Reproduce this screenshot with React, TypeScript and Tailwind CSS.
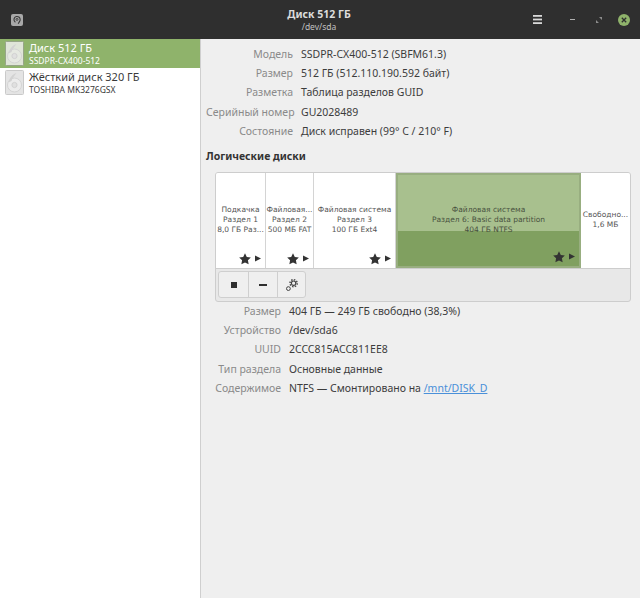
import React from "react";

const ui = { fontFamily: '"Noto Sans", sans-serif' };
const dj = { fontFamily: '"DejaVu Sans", sans-serif' };

function DiskIcon({ active }: { active?: boolean }) {
  return (
    <svg width="19" height="25" viewBox="0 0 19 25" className="shrink-0">
      <rect x="0.5" y="0.5" width="18" height="24" rx="1" fill={active ? "#dfe5d8" : "#e4e4e4"} stroke={active ? "#97a589" : "#cacaca"} />
      <circle cx="9.5" cy="15" r="7" fill={active ? "#e6e9e2" : "#ececec"} stroke="#d4d4d4" />
      <circle cx="9.5" cy="15" r="2.6" fill="#e0e0e0" stroke="#d2d2d2" />
      <path d="M3.5 12.5 C4.5 8 7.5 4 11.5 3 C9 6 7 9 6.5 11 Z" fill="#d2d2d2" />
    </svg>
  );
}

function DiskRow({ title, sub, active }: { title: string; sub: string; active?: boolean }) {
  return (
    <div className={`flex h-[29px] items-center gap-[5px] pl-[5px] ${active ? "bg-[#8fb36b] text-white" : "bg-white text-[#3a3a3a]"}`}>
      <DiskIcon active={active} />
      <div className="flex flex-col">
        <span className="text-[11px] leading-[14px]">{title}</span>
        <span className="text-[8.5px] leading-[11px]">{sub}</span>
      </div>
    </div>
  );
}

function Field({ label, width, children }: { label: string; width: string; children: React.ReactNode }) {
  return (
    <div className="flex h-[19.3px] items-center text-[10.5px]">
      <span className={`shrink-0 whitespace-nowrap text-right text-[#8a8a8a] ${width}`}>{label}</span>
      <span className="ml-[8px] whitespace-nowrap text-[#3c3c3c]">{children}</span>
    </div>
  );
}

function Marks() {
  return (
    <div className="absolute bottom-[3px] right-[4px] flex items-center gap-[4px] text-[#333]">
      <svg width="12" height="12" viewBox="0 0 24 24" fill="currentColor">
        <path d="M12 0.5l3.6 7.4 8.1 1.1-5.9 5.6 1.5 8.1-7.3-3.9-7.3 3.9 1.5-8.1L0.3 9l8.1-1.1z" />
      </svg>
      <svg width="6" height="7" viewBox="0 0 6 7" fill="currentColor">
        <path d="M0 0.5L6 3.5L0 6.5z" />
      </svg>
    </div>
  );
}

function Part({ w, lines, marks = true }: { w: string; lines: string[]; marks?: boolean }) {
  return (
    <div className={`relative flex h-full shrink-0 flex-col items-center justify-center overflow-hidden border-r border-[#d4d4d4] bg-white pb-px text-center text-[7.5px] leading-[9.7px] text-[#555] ${w}`} style={dj}>
      {lines.map((l) => (
        <span key={l} className="whitespace-nowrap">{l}</span>
      ))}
      {marks && <Marks />}
    </div>
  );
}

export default function App() {
  return (
    <div className="flex h-[598px] w-[640px] flex-col overflow-hidden bg-[#efefef]" style={ui}>
      <header className="flex h-[39px] shrink-0 items-center bg-[#2f2f2f] text-[#dcdcdc]">
        <div className="ml-[11px] flex h-[12px] w-[12px] items-center justify-center rounded-[2px] bg-[#a8a8a8]">
          <svg width="10" height="10" viewBox="0 0 10 10" fill="none" stroke="#3a3a3a">
            <path d="M3.4 7.2A3.1 3.1 0 1 1 7.6 6.4L6.2 8.8" strokeWidth="1.1" />
            <circle cx="5" cy="4.4" r="1" strokeWidth="0.9" />
          </svg>
        </div>
        <div className="ml-[251px] flex w-[90px] flex-col items-center">
          <span className="text-[10.5px] font-bold leading-[13px]">Диск 512 ГБ</span>
          <span className="text-[8.5px] leading-[11px] text-[#c2c2c2]">/dev/sda</span>
        </div>
        <svg width="9" height="9" viewBox="0 0 9 9" className="ml-[169px]" fill="#d8d8d8">
          <rect width="9" height="1.8" />
          <rect y="3.6" width="9" height="1.8" />
          <rect y="7.2" width="9" height="1.8" />
        </svg>
        <span className="ml-[28px] h-px w-[5px] bg-[#b0b0b0]" />
        <svg width="6" height="6" viewBox="0 0 6 6" className="ml-[21px]" fill="#8c8c8c">
          <path d="M3 0h3v3zM0 3l3 3H0z" />
        </svg>
        <div className="ml-[16px] flex h-[12px] w-[12px] items-center justify-center rounded-full bg-[#8fb36b]">
          <svg width="6" height="6" viewBox="0 0 6 6" stroke="#2f2f2f" strokeWidth="1.3">
            <path d="M0.8 0.8l4.4 4.4M5.2 0.8L0.8 5.2" />
          </svg>
        </div>
      </header>
      <div className="flex min-h-0 flex-1">
        <aside className="w-[201px] shrink-0 border-r border-[#cfcfcf] bg-white">
          <DiskRow active title="Диск 512 ГБ" sub="SSDPR-CX400-512" />
          <DiskRow title="Жёсткий диск 320 ГБ" sub="TOSHIBA MK3276GSX" />
        </aside>
        <main className="flex min-w-0 flex-1 flex-col pl-[5px] pt-[6px]">
          <Field width="w-[87px]" label="Модель">SSDPR-CX400-512 (SBFM61.3)</Field>
          <Field width="w-[87px]" label="Размер">512 ГБ (512.110.190.592 байт)</Field>
          <Field width="w-[87px]" label="Разметка">Таблица разделов GUID</Field>
          <Field width="w-[87px]" label="Серийный номер">GU2028489</Field>
          <Field width="w-[87px]" label="Состояние">Диск исправен (99° C / 210° F)</Field>
          <h2 className="mt-[8px] text-[10.5px] font-bold leading-[14px] text-[#333]">Логические диски</h2>
          <section className="ml-[9px] mt-[8.5px] w-[416px] overflow-hidden rounded-[3px] border border-[#cdcdcd] bg-[#e8e8e8]">
            <div className="flex h-[96px] border-b border-[#cdcdcd]">
              <Part w="w-[50px]" lines={["Подкачка", "Раздел 1", "8,0 ГБ Раз..."]} />
              <Part w="w-[48px]" lines={["Файловая...", "Раздел 2", "500 МБ FAT"]} />
              <Part w="w-[82px]" lines={["Файловая система", "Раздел 3", "100 ГБ Ext4"]} />
              <div className="relative flex h-full w-[185px] shrink-0 flex-col items-center justify-center border-2 border-[#98ae80] bg-[linear-gradient(#a8c08e_0,#a8c08e_56px,#80a060_56px,#80a060_100%)] pb-px text-center text-[7.5px] leading-[9.7px] text-[#49523f]" style={dj}>
                <span>Файловая система</span>
                <span>Раздел 6: Basic data partition</span>
                <span>404 ГБ NTFS</span>
                <Marks />
              </div>
              <Part w="flex-1 border-r-0" marks={false} lines={["Свободно...", "1,6 МБ"]} />
            </div>
            <div className="flex h-[32px] items-center pl-[2px]">
              <div className="flex h-[27px] overflow-hidden rounded-[3px] border border-[#cfcfcf] bg-[#efefef]">
                <div className="flex w-[30px] items-center justify-center border-r border-[#cfcfcf]">
                  <span className="h-[6px] w-[6px] bg-[#2f2f2f]" />
                </div>
                <div className="flex w-[29px] items-center justify-center border-r border-[#cfcfcf]">
                  <span className="h-[2px] w-[8px] bg-[#2f2f2f]" />
                </div>
                <div className="flex w-[27px] items-center justify-center">
                  <svg width="14" height="14" viewBox="0 0 14 14" fill="none" stroke="#444">
                    <circle cx="8.6" cy="5.2" r="2.2" strokeWidth="1.2" />
                    <circle cx="8.6" cy="5.2" r="3.6" strokeWidth="1.4" strokeDasharray="1.5 1.3" />
                    <circle cx="3.4" cy="10.6" r="1.9" strokeWidth="1" />
                  </svg>
                </div>
              </div>
            </div>
          </section>
          <div>
            <Field width="w-[75px]" label="Размер">404 ГБ — 249 ГБ свободно (38,3%)</Field>
            <Field width="w-[75px]" label="Устройство">/dev/sda6</Field>
            <Field width="w-[75px]" label="UUID">2CCC815ACC811EE8</Field>
            <Field width="w-[75px]" label="Тип раздела">Основные данные</Field>
            <Field width="w-[75px]" label="Содержимое">
              NTFS — Смонтировано на <span className="text-[#4a90d9] underline">/mnt/DISK_D</span>
            </Field>
          </div>
        </main>
      </div>
    </div>
  );
}
